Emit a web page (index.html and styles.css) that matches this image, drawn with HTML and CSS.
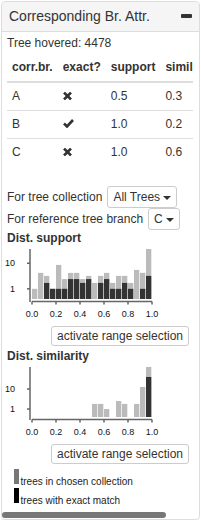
FILE: index.html
```html
<!DOCTYPE html>
<html lang="en">

<head>
    <meta charset="UTF-8">
    <meta name="viewport" content="width=device-width, initial-scale=1.0">
    <title>Corresponding Br. Attr.</title>
    <link rel="stylesheet" href="styles.css">
</head>

<body>
    <div class="panel">
        <div class="panel-heading">
            <span class="panel-title">Corresponding Br. Attr.</span>
            <span class="icon-minus"></span>
        </div>
        <div class="panel-body">
            <p class="hovered">Tree hovered: 4478</p>
            <div class="table-wrap">
                <table class="table">
                    <thead>
                        <tr>
                            <th>corr.br.</th>
                            <th>exact?</th>
                            <th>support</th>
                            <th>similarity</th>
                        </tr>
                    </thead>
                    <tbody>
                        <tr>
                            <td>A</td>
                            <td><svg class="icon" width="9" height="8" viewBox="0 0 9 8"><path d="M1 0.5L8 7.5M8 0.5L1 7.5" /></svg></td>
                            <td>0.5</td>
                            <td>0.3</td>
                        </tr>
                        <tr>
                            <td>B</td>
                            <td><svg class="icon" width="11" height="9" viewBox="0 0 11 9"><path d="M1 4.5L4 7.5L10 1" /></svg></td>
                            <td>1.0</td>
                            <td>0.2</td>
                        </tr>
                        <tr>
                            <td>C</td>
                            <td><svg class="icon" width="9" height="8" viewBox="0 0 9 8"><path d="M1 0.5L8 7.5M8 0.5L1 7.5" /></svg></td>
                            <td>1.0</td>
                            <td>0.6</td>
                        </tr>
                    </tbody>
                </table>
            </div>

            <div class="form-row">
                <span>For tree collection</span>
                <button class="btn">All Trees <span class="caret"></span></button>
            </div>
            <div class="form-row">
                <span>For reference tree branch</span>
                <button class="btn">C <span class="caret"></span></button>
            </div>

            <div class="chart-block">
                <h5>Dist. support</h5>
                <svg id="supportChart" class="chart" width="226" height="73"></svg>
                <div class="range-row"><button class="btn btn-range">activate range selection</button></div>

                <h5 class="second">Dist. similarity</h5>
                <svg id="similarityChart" class="chart" width="226" height="73"></svg>
                <div class="range-row"><button class="btn btn-range">activate range selection</button></div>

                <svg class="legend" width="226" height="43">
                    <rect x="7" y="5" width="5" height="15" fill="#777"></rect>
                    <text x="13.5" y="20.5">trees in chosen collection</text>
                    <rect x="7" y="24" width="5" height="15" fill="#000"></rect>
                    <text x="13.5" y="39.5">trees with exact match</text>
                </svg>
            </div>
        </div>
        <div class="scrollbar"><div class="scroll-thumb"></div></div>
    </div>

    <script>
        // log-scaled histograms, 20 bins over [0, 1]
        const supportAll = [1, 4.2, 3.2, 1, 8.6, 2.4, 4.2, 4.2, 2.4, 3.2, 1.7, 3.2, 4.2, 1.7, 3.2, 3.2, 1.7, 5.5, 4.2, 36];
        const supportExact = [0, 0, 1.7, 1, 1, 1, 2.4, 2.4, 1.7, 2.4, 0, 1.7, 2.4, 1, 1, 1.7, 1, 0, 1, 3.2];
        const similarityAll = [0, 0, 0, 0, 0, 0, 0, 0, 0, 0, 1.8, 1.8, 1, 0, 2.5, 1.8, 0, 1.8, 12.6, 126];
        const similarityExact = [0, 0, 0, 0, 0, 0, 0, 0, 0, 0, 0, 0, 0, 0, 0, 0, 0, 0, 0, 40];

        function drawHistogram(id, all, exact) {
            const svg = document.getElementById(id);
            const max = Math.max(...all);
            const k = 50 / Math.log10(max / 0.4);
            const y = v => 52 - k * Math.log10(v / 0.4);
            let html = '';

            all.forEach((v, i) => {
                if (v > 0) html += `<rect class="bar-all" x="${25 + i * 6}" y="${y(v)}" width="5.3" height="${52 - y(v)}"></rect>`;
            });
            exact.forEach((v, i) => {
                if (v > 0) html += `<rect class="bar-exact" x="${25 + i * 6}" y="${y(v)}" width="5.3" height="${52 - y(v)}"></rect>`;
            });

            html += `<path class="axis" d="M23,${y(max)}V55"></path>`;
            [1, 10].forEach(t => {
                html += `<path class="axis" d="M20,${y(t)}H23"></path>`;
                html += `<text class="tick" x="8" y="${y(t)}" dy="0.35em" text-anchor="end">${t}</text>`;
            });

            html += `<path class="axis" d="M25,54.5H145"></path>`;
            for (let i = 0; i <= 5; i++) {
                const x = 25 + i * 24;
                html += `<path class="axis" d="M${x},54.5V57.5"></path>`;
                html += `<text class="tick" x="${x}" y="70" text-anchor="middle">${(i * 0.2).toFixed(1)}</text>`;
            }
            svg.innerHTML = html;
        }

        drawHistogram('supportChart', supportAll, supportExact);
        drawHistogram('similarityChart', similarityAll, similarityExact);
    </script>
</body>

</html>
```

FILE: styles.css
```css
body {
    margin: 1px;
    font-family: "Liberation Sans", Arial, Helvetica, sans-serif;
    font-size: 12px;
    line-height: 17px;
    color: #333;
    background-color: #fff;
}

.panel {
    width: 199px;
    box-sizing: border-box;
    border: 1px solid #ddd;
    border-radius: 4px;
    box-shadow: 0 1px 1px rgba(0, 0, 0, 0.05);
}

.panel-heading {
    display: flex;
    justify-content: space-between;
    align-items: center;
    padding: 6px 7px;
    background-color: #f5f5f5;
    border-bottom: 1px solid #ddd;
    border-radius: 3px 3px 0 0;
}

.panel-title {
    font-size: 14px;
    line-height: 17px;
}

.icon-minus {
    width: 11px;
    height: 4px;
    margin-bottom: 2px;
    background-color: #333;
    border-radius: 1px;
}

.panel-body {
    padding: 3px 5px 4px;
    overflow: hidden;
}

.scrollbar {
    height: 6px;
    padding: 1px 0;
}

.scroll-thumb {
    width: 164px;
    height: 6px;
    background-color: #777;
    border-radius: 3px;
}

.hovered {
    margin: 0;
}

.table-wrap {
    width: 186px;
    overflow: hidden;
    margin: 2px 0 20px;
}

.table {
    border-collapse: collapse;
    border-spacing: 0;
    white-space: nowrap;
}

.table th,
.table td {
    padding: 5px;
    text-align: left;
    line-height: 17px;
}

.table th {
    font-weight: bold;
    border-bottom: 2px solid #ddd;
}

.table td {
    border-top: 1px solid #ddd;
}

.table tbody tr:first-child td {
    border-top: 0;
}

.icon {
    vertical-align: 0;
}

.icon path {
    fill: none;
    stroke: #333;
    stroke-width: 2.6;
}

.form-row {
    display: flex;
    align-items: center;
    gap: 5px;
    height: 22px;
    white-space: nowrap;
}

.btn {
    display: inline-block;
    padding: 1px 5px;
    font-family: inherit;
    font-size: 12px;
    line-height: 18px;
    color: #333;
    background-color: #fff;
    border: 1px solid #ccc;
    border-radius: 3px;
    cursor: pointer;
}

.caret {
    display: inline-block;
    width: 0;
    height: 0;
    vertical-align: middle;
    border-top: 4px solid #333;
    border-left: 4px solid transparent;
    border-right: 4px solid transparent;
}

.chart-block {
    width: 226px;
}

h5 {
    margin: 0;
    font-size: 12px;
    line-height: 17px;
    font-weight: bold;
}

h5.second {
    margin-top: 2px;
}

.chart,
.legend {
    display: block;
    overflow: visible;
}

.range-row {
    margin-top: 6px;
    text-align: center;
}

.btn-range {
    padding: 0 5px;
}

.bar-all {
    fill: #bbb;
}

.bar-exact {
    fill: #333;
}

.axis {
    fill: none;
    stroke: #666;
    stroke-width: 1.5;
}

.tick {
    font-size: 9px;
    fill: #111;
}

.legend text {
    font-size: 10px;
    fill: #222;
}
```
